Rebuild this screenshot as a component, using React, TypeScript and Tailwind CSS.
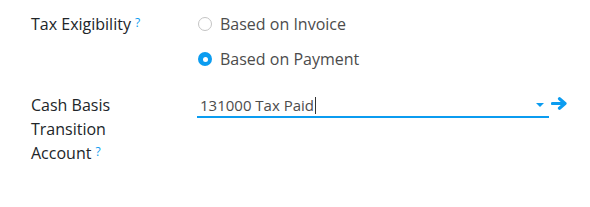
import { useState } from 'react';

function Radio({ checked, label, onClick }: { checked: boolean; label: string; onClick: () => void }) {
    return (
        <label className="flex items-center gap-[8px] cursor-pointer h-[24px]" onClick={onClick}>
            <span
                className={
                    checked
                        ? 'w-[14px] h-[14px] rounded-full bg-[#0b9cf0] flex items-center justify-center'
                        : 'w-[14px] h-[14px] rounded-full border border-[#c4c4c4] bg-white'
                }
            >
                {checked && <span className="w-[5px] h-[5px] rounded-full bg-white" />}
            </span>
            <span className="text-[#4c4c4c]">{label}</span>
        </label>
    );
}

function Help() {
    return <sup className="text-[#0b9cf0] text-[12px] ml-[4px] relative -top-[3px]">?</sup>;
}

export default function App() {
    const [basis, setBasis] = useState<'invoice' | 'payment'>('payment');

    return (
        <div
            className="w-[590px] h-[207px] bg-white text-[16px] text-[#212529] pl-[31px] pt-[12px]"
            style={{ fontFamily: '"Open Sans", Roboto, sans-serif' }}
        >
            {/* Tax exigibility */}
            <div className="flex">
                <div className="w-[166px] leading-[24px]">
                    Tax Exigibility
                    <Help />
                </div>
                <div className="flex flex-col gap-[11px] pl-[1px]">
                    <Radio checked={basis === 'invoice'} label="Based on Invoice" onClick={() => setBasis('invoice')} />
                    <Radio checked={basis === 'payment'} label="Based on Payment" onClick={() => setBasis('payment')} />
                </div>
            </div>

            {/* Cash basis account */}
            <div className="flex mt-[22px]">
                <div className="w-[166px] leading-[24px]">
                    Cash Basis
                    <br />
                    Transition
                    <br />
                    Account
                    <Help />
                </div>
                <div className="flex items-start pt-[1px]">
                    <div className="w-[352px] h-[24px] border-b-2 border-[#0b9cf0] flex items-center pl-[3px] pr-[5px]">
                        <span className="text-[#4c4c4c] text-[15px] flex-1 flex items-center">
                            131000 Tax Paid
                            <span className="w-[1px] h-[17px] bg-[#333] ml-[1px]" />
                        </span>
                        <svg width="8" height="5" viewBox="0 0 8 5" className="mt-[1px]">
                            <path d="M0 0 L8 0 L4 4 Z" fill="#0b9cf0" />
                        </svg>
                    </div>
                    <svg width="17" height="13" viewBox="0 0 17 13" className="ml-[2px] mt-[3px]">
                        <path
                            d="M1.5 6.5 H13 M8.5 1.8 L14 6.5 L8.5 11.2"
                            stroke="#0b9cf0"
                            strokeWidth="3.2"
                            fill="none"
                            strokeLinecap="round"
                            strokeLinejoin="round"
                        />
                    </svg>
                </div>
            </div>
        </div>
    );
}
